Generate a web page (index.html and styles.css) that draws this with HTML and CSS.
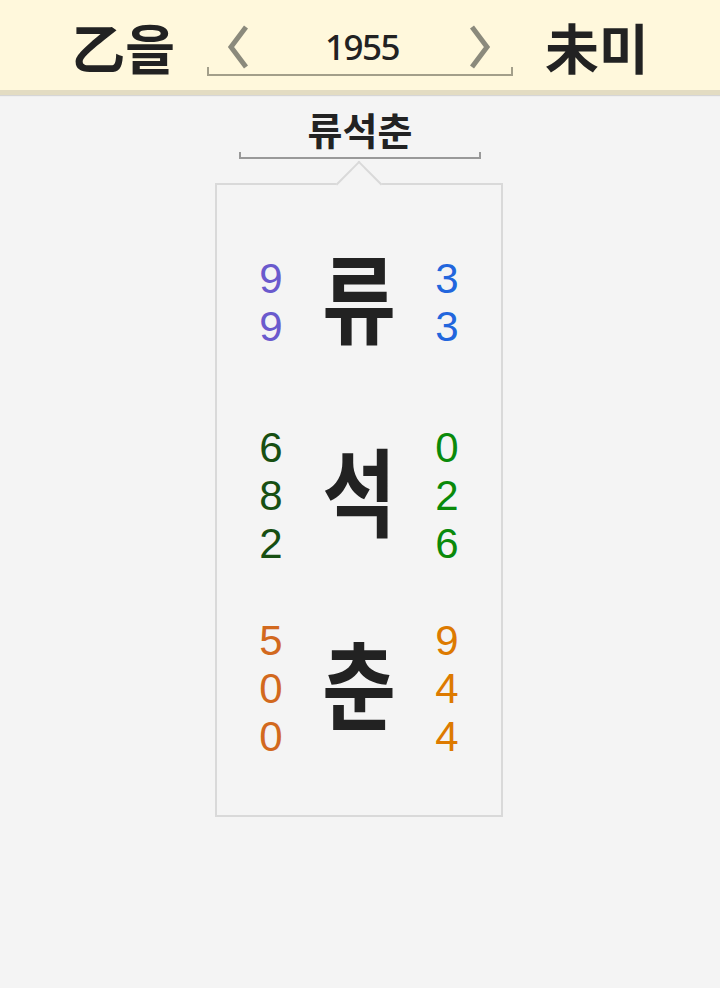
FILE: index.html
```html
<!DOCTYPE html>
<html lang="ko">
<head>
<meta charset="utf-8">
<title>류석춘</title>
<link rel="stylesheet" href="styles.css">
</head>
<body>
<header class="top">
  <div class="pillar">乙을</div>
  <div class="year">
    <svg class="chev" width="22" height="44" viewBox="0 0 22 44"><polyline points="19,2 4,22 19,42" /></svg>
    <span class="year-num">1955</span>
    <svg class="chev" width="22" height="44" viewBox="0 0 22 44"><polyline points="3,2 18,22 3,42" /></svg>
  </div>
  <div class="pillar">未미</div>
</header>
<main class="main">
  <div class="name">류석춘</div>
  <div class="bracket"></div>
  <div class="card">
    <div class="notch"></div>
    <div class="group">
      <div class="digits purple"><span>9</span><span>9</span></div>
      <div class="big">류</div>
      <div class="digits blue"><span>3</span><span>3</span></div>
    </div>
    <div class="group">
      <div class="digits dgreen"><span>6</span><span>8</span><span>2</span></div>
      <div class="big">석</div>
      <div class="digits green"><span>0</span><span>2</span><span>6</span></div>
    </div>
    <div class="group">
      <div class="digits orange"><span>5</span><span>0</span><span>0</span></div>
      <div class="big">춘</div>
      <div class="digits amber"><span>9</span><span>4</span><span>4</span></div>
    </div>
  </div>
</main>
</body>
</html>
```
FILE: styles.css
```css
html, body {
  margin: 0;
  padding: 0;
}
body {
  background: #f4f4f4;
  font-family: "Noto Sans CJK KR", "Noto Sans", sans-serif;
  color: #222;
}
.top {
  box-sizing: border-box;
  height: 95px;
  padding-top: 4px;
  background: #fff8dc;
  border-bottom: 5px solid #e3dcc2;
  box-shadow: 0 1px 1px rgba(0, 0, 0, 0.12);
  display: flex;
  align-items: center;
  justify-content: center;
  gap: 32px;
}
.pillar {
  font-size: 54px;
  font-weight: 700;
  line-height: 60px;
  color: #222;
}
.year {
  position: relative;
  box-sizing: border-box;
  width: 306px;
  height: 58px;
  padding: 0 22px 0 20px;
  display: flex;
  align-items: center;
  justify-content: space-between;
}
.year::after {
  content: "";
  position: absolute;
  left: 0;
  right: 0;
  bottom: 0;
  height: 7px;
  border: 2px solid #a39f8a;
  border-top: 0;
}
.chev {
  display: block;
}
.chev polyline {
  fill: none;
  stroke: #8b8a7c;
  stroke-width: 5;
}
.year-num {
  font-family: "Noto Sans", sans-serif;
  font-size: 35px;
  font-weight: 500;
  letter-spacing: -1.5px;
  line-height: 40px;
  color: #222;
  margin-left: 6px;
}
.main {
  display: flex;
  flex-direction: column;
  align-items: center;
  padding-top: 11px;
}
.name {
  font-size: 38px;
  font-weight: 700;
  line-height: 45px;
}
.bracket {
  box-sizing: border-box;
  width: 242px;
  height: 7px;
  margin-top: 1px;
  border: 2px solid #999;
  border-top: 0;
}
.card {
  position: relative;
  box-sizing: border-box;
  width: 288px;
  margin-top: 24px;
  margin-right: 2px;
  border: 2px solid #d9d9d9;
  padding: 21px 0 30px;
}
.notch {
  position: absolute;
  left: 50%;
  top: -1px;
  width: 31px;
  height: 31px;
  background: #f4f4f4;
  border-top: 2px solid #d9d9d9;
  border-left: 2px solid #d9d9d9;
  transform: translate(-50%, -50%) rotate(45deg);
}
.group {
  height: 193px;
  display: grid;
  grid-template-columns: 30px 80px 30px;
  column-gap: 33px;
  justify-content: center;
  align-items: center;
}
.digits {
  display: flex;
  flex-direction: column;
  align-items: center;
  font-family: "Liberation Sans", sans-serif;
  font-size: 42px;
  line-height: 48px;
}
.big {
  font-size: 80px;
  font-weight: 700;
  line-height: 1;
  text-align: center;
  color: #222;
  transform: translateY(-9px) scaleY(1.2);
}
.purple { color: #6a5acd; }
.blue { color: #2266dd; }
.dgreen { color: #174f12; }
.green { color: #0a8a0a; }
.orange { color: #d2691e; }
.amber { color: #dd7a00; }
```
